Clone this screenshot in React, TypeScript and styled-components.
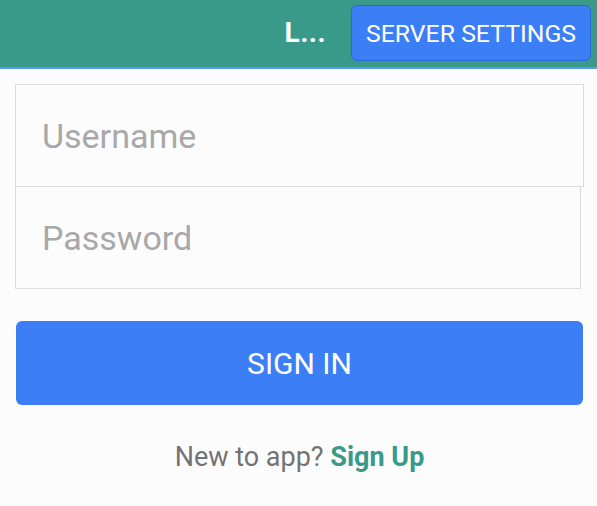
import React from "react";
import styled, { createGlobalStyle } from "styled-components";

const Global = createGlobalStyle`
  html, body { margin: 0; padding: 0; background: #fdfcfd; }
  body { font-family: Roboto, "Noto Sans", sans-serif; }
  * { box-sizing: border-box; }
`;

const Header = styled.header`
  height: 69px;
  background: #3a9a8a;
  border-bottom: 2px solid #5b9bef;
  display: flex;
  align-items: center;
  justify-content: flex-end;
  padding: 0 6px 3px 0;
`;

const Title = styled.h1`
  margin: 0 25px 0 0;
  color: #ffffff;
  font-size: 28px;
  font-weight: 700;
  letter-spacing: 0.5px;
`;

const SettingsButton = styled.button`
  width: 240px;
  height: 56px;
  margin-top: 2px;
  background: #3b7ef5;
  border: 1.5px solid #2a68d6;
  border-radius: 6px;
  color: #ffffff;
  font-family: Roboto, sans-serif;
  font-size: 24.8px;
  font-weight: 400;
  padding: 0;
  white-space: nowrap;
`;

const Form = styled.main`
  display: flex;
  flex-direction: column;
  padding: 15px 13px 0 15px;
`;

const Field = styled.input<{ $inset?: number; $top?: boolean }>`
  height: 103px;
  width: calc(100% - ${(p) => p.$inset ?? 0}px);
  margin-top: ${(p) => (p.$top ? 0 : -1)}px;
  border: 1.5px solid #dcdcdc;
  background: #fdfcfd;
  padding: 0 0 0 26px;
  font-family: Roboto, sans-serif;
  font-size: 34px;
  color: #333;
  outline: none;
  &::placeholder { color: #a8a8a8; }
`;

const SignInButton = styled.button`
  margin: 32px 1px 0 1px;
  height: 84px;
  background: #3b7ef5;
  border: none;
  border-radius: 6px;
  color: #ffffff;
  font-family: Roboto, sans-serif;
  font-size: 30px;
  font-weight: 400;
`;

const Footer = styled.p`
  margin: 36px 0 0 0;
  text-align: center;
  font-size: 27px;
  color: #737373;
`;

const SignUp = styled.a`
  color: #3a9a8a;
  font-weight: 700;
  text-decoration: none;
`;

export default function App() {
  return (
    <>
      <Global />
      <Header>
        <Title>L...</Title>
        <SettingsButton>SERVER SETTINGS</SettingsButton>
      </Header>
      <Form>
        <Field $top placeholder="Username" />
        <Field $inset={3} type="password" placeholder="Password" />
        <SignInButton>SIGN IN</SignInButton>
        <Footer>
          New to app? <SignUp href="#">Sign Up</SignUp>
        </Footer>
      </Form>
    </>
  );
}
